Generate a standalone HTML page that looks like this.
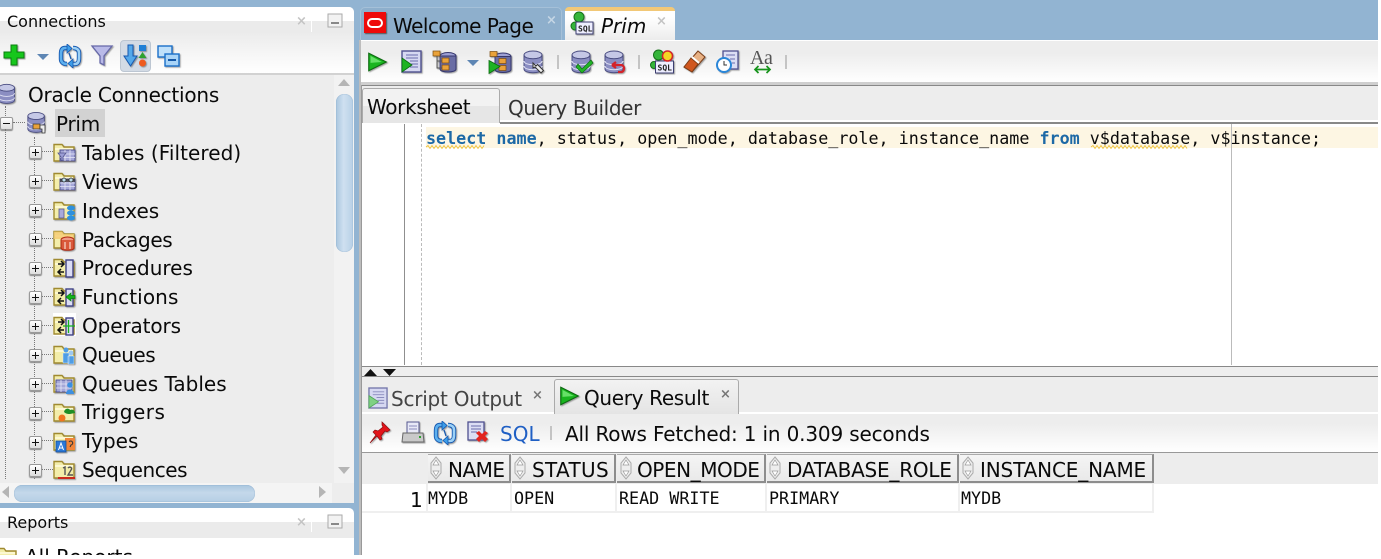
<!DOCTYPE html>
<html><head><meta charset="utf-8"><style>
html,body{margin:0;padding:0;background:#fff}
body{width:1381px;height:559px;overflow:hidden;position:relative}
#app{position:absolute;left:0;top:0;width:1378px;height:555px;background:#92b4d2;overflow:hidden;filter:blur(.3px)}
.a{position:absolute}
.t{position:absolute;white-space:nowrap;font-family:"DejaVu Sans","Liberation Sans",sans-serif;font-size:20px;line-height:24px;color:#0a0a0a}
.m{position:absolute;white-space:nowrap;font-family:"DejaVu Sans Mono","Liberation Mono",monospace;font-size:16.72px;line-height:20px;color:#0a0a0a}
.i{position:absolute;overflow:visible;filter:drop-shadow(1px 1px .6px rgba(0,0,0,.35))}
.n{position:absolute;overflow:visible}
.c{position:absolute;white-space:nowrap;font-family:"DejaVu Sans",sans-serif;font-size:13px;font-weight:bold;line-height:20px}
.x{position:absolute;width:11px;height:11px;border:1px solid #999;border-radius:2px;background:linear-gradient(#fff,#ddd);box-shadow:0 1px 1px #888}
.x:before{content:"";position:absolute;left:2px;top:5px;width:7px;height:1px;background:#111}
.p:after{content:"";position:absolute;left:5px;top:2px;width:1px;height:7px;background:#111}
.dv{position:absolute;border-left:1px dotted #777;width:0}
.dh{position:absolute;border-top:1px dotted #777;height:0}
.th{position:absolute;top:454px;height:29px;background:linear-gradient(#f4f4f4,#e9e9e9);border-right:2px solid #8d8d8d;border-bottom:2px solid #8d8d8d;border-top:1px solid #aaa;box-sizing:border-box}
.td{position:absolute;top:484px;height:29px;border-right:2px solid #efefef;border-bottom:2px solid #efefef;box-sizing:border-box}
</style></head><body><div id="app">
<svg width="0" height="0" style="position:absolute"><defs>
<symbol id="f" viewBox="0 0 24 24"><path d="M1 3.500h8l2 2.500h10v14H1z" fill="#f3edaa" stroke="#a08a30" stroke-width="1.400"/><path d="M2 7h18v2H2z" fill="#fcf8d2"/></symbol>
<symbol id="go" viewBox="0 0 24 24"><path d="M2 2L22 12L2 22z" fill="#19b51f" stroke="#0c6a10" stroke-width="1.300"/><path d="M4 5L17 12L4 13z" fill="#66e068"/></symbol>
<symbol id="rf" viewBox="0 0 24 24"><path d="M11 4H7C3.500 4 3 7 3 10v5c0 3 2 5 6 5" fill="none" stroke="#1558b0" stroke-width="4.400"/><path d="M11 4H7C3.500 4 3 7 3 10v5c0 3 2 5 6 5" fill="none" stroke="#5db0ee" stroke-width="2.600"/><path d="M13 20h4c3.500 0 4-3 4-6V9c0-3-2-5-6-5" fill="none" stroke="#1558b0" stroke-width="4.400"/><path d="M13 20h4c3.500 0 4-3 4-6V9c0-3-2-5-6-5" fill="none" stroke="#9bd0f6" stroke-width="2.600"/><path d="M9 0v9l5-4.500zM15 24v-9l-5 4.500z" fill="#3d9de8" stroke="#1558b0" stroke-width=".8"/><path d="M11 9l2 6" stroke="#1558b0" stroke-width="1.200"/></symbol>
<symbol id="db" viewBox="0 0 24 24"><ellipse cx="11" cy="5" rx="9" ry="4" fill="#c5c8e6" stroke="#4b4e82"/><path d="M2 5v14c0 5 18 5 18 0V5c0 5-18 5-18 0z" fill="#8b8ec2" stroke="#4b4e82"/><path d="M2 11c0 5 18 5 18 0M2 16c0 5 18 5 18 0" fill="none" stroke="#dfe0f3"/></symbol>
<symbol id="grid" viewBox="0 0 24 24"><rect x="7" y="9" width="15" height="11" fill="#a6a8d8" stroke="#4f5190"/><path d="M7 13h15M7 16.500h15M12 9v11M17 9v11" stroke="#e6e7f7" stroke-width=".8"/></symbol>
<symbol id="arr" viewBox="0 0 24 24"><path d="M5 8h6M8 5l3 3-3 3M11 16H5M8 13l-3 3 3 3" fill="none" stroke="#111" stroke-width="1.500"/><rect x="13" y="4" width="7" height="17" fill="#dcdcf4" stroke="#3f4185" stroke-width="1.400"/></symbol>
<symbol id="sort" viewBox="0 0 12 24"><path d="M6 1L11 7V17L6 23L1 17V7z" fill="#eee" stroke="#aaa"/><path d="M6 4l3 5H3zM6 20l3-5H3z" fill="#fff" stroke="#999" stroke-width=".7"/></symbol>
<symbol id="mn" viewBox="0 0 16 16"><rect x="1" y="1" width="14" height="13" fill="#f2f2f2" stroke="#aaa"/><rect x="4" y="9" width="8" height="2" fill="#888"/></symbol>
</defs></svg>

<!-- LEFT TOP PANEL -->
<div class="a" style="left:0;top:7px;width:354px;height:496px;background:#ededed;border-radius:0 5px 0 0;overflow:hidden">
<div class="a" style="left:0;top:0;width:354px;height:14px;background:#fff"></div>
<div class="a" style="left:0;top:14px;width:354px;height:12px;background:#ebebeb"></div>
<div class="a" style="left:0;top:26px;width:354px;height:40px;background:linear-gradient(#ececec,#fff)"></div>
<div class="a" style="left:0;top:66px;width:354px;height:2px;background:#d2d2d2"></div>
</div>
<div class="t" style="left:7px;top:12px;font-size:16px;line-height:20px">Connections</div>
<div class="c" style="left:296px;top:12px;color:#c4c4c4">×</div>
<div class="a" style="left:311px;top:12px;width:1px;height:20px;background:#fff"></div>
<svg class="n" style="left:327px;top:13px" width="16" height="16"><use href="#mn"/></svg>

<svg class="i" style="left:3px;top:44px" width="23" height="23" viewBox="0 0 23 23"><path d="M8 1h6v7h7v6h-7v7H8v-7H1V8h7z" fill="#16c71c" stroke="#0a7d0e"/></svg>
<svg class="n" style="left:37px;top:53px" width="13" height="8"><path d="M0 1h12L6 7z" fill="#5e86b4"/></svg>
<svg class="i" style="left:58px;top:44px" width="24" height="24"><use href="#rf"/></svg>
<svg class="i" style="left:91px;top:45px" width="22" height="22" viewBox="0 0 22 22"><path d="M1 1h20L13 11v9l-4-2v-7z" fill="#b9bae8" stroke="#6668a8" stroke-width="1.300"/></svg>
<div class="a" style="left:120px;top:40px;width:31px;height:32px;background:#d3dbe5;border:1px solid #bcc6d2;border-radius:4px;box-sizing:border-box"></div>
<svg class="i" style="left:123px;top:44px" width="26" height="24" viewBox="0 0 26 24"><path d="M5 1h5v11h4l-6.500 10L1 12h4z" fill="#54a8ea" stroke="#1558b0"/><rect x="16" y="1" width="7" height="6" fill="#1f7fd6"/><path d="M19.500 8l4 6h-8z" fill="#2da12f"/><circle cx="19.500" cy="19" r="3.500" fill="#ee5a1e"/></svg>
<svg class="i" style="left:157px;top:44px" width="23" height="24" viewBox="0 0 23 24"><rect x="1" y="2" width="14" height="11" fill="#bfe0fa" stroke="#1a6fc9" stroke-width="1.400"/><rect x="8" y="10" width="14" height="12" fill="#a9d4f7" stroke="#1a6fc9" stroke-width="1.400"/><rect x="11" y="15" width="8" height="2" fill="#1458a8"/></svg>

<!-- tree -->
<svg class="i" style="left:-3px;top:82px" width="21" height="24"><use href="#db"/></svg>
<div class="t" style="left:28px;top:83px;letter-spacing:-.22px">Oracle Connections</div>
<div class="a" style="left:55px;top:109px;width:50px;height:28px;background:#d2d2d2"></div>
<div class="x" style="left:0;top:117px"></div>
<div class="dh" style="left:13px;top:122px;width:12px"></div>
<div class="dv" style="left:5px;top:106px;height:10px"></div>
<div class="dv" style="left:5px;top:129px;height:350px"></div>
<div class="dv" style="left:34px;top:137px;height:342px"></div>
<svg class="i" style="left:26px;top:111px" width="22" height="23"><use href="#db"/></svg>
<svg class="n" style="left:32px;top:122px" width="16" height="12" viewBox="0 0 16 12"><rect x="1" y="2" width="7" height="5" fill="#e9a23a" stroke="#333" stroke-width=".7"/><path d="M8 3h5v8h-3V7H8z" fill="#eee" stroke="#333" stroke-width=".8"/></svg>
<div class="t" style="left:56px;top:112px;letter-spacing:-.25px">Prim</div>

<div class="x p" style="left:29px;top:146px"></div><div class="dh" style="left:42px;top:151px;width:11px"></div>
<svg class="i" style="left:53px;top:141px" width="24" height="24"><use href="#f"/><use href="#grid"/><path d="M5 12h8l-3 4v4l-2-1v-3z" fill="#9b9dd5" stroke="#55578f" stroke-width=".8"/></svg>
<div class="t" style="left:82px;top:141px;letter-spacing:.06px">Tables (Filtered)</div>

<div class="x p" style="left:29px;top:175px"></div><div class="dh" style="left:42px;top:180px;width:11px"></div>
<svg class="i" style="left:53px;top:170px" width="24" height="24"><use href="#f"/><use href="#grid"/><path d="M7 9h15v3H7z" fill="#333" opacity=".75"/><circle cx="11" cy="10" r="2" fill="#bde" stroke="#222" stroke-width=".7"/><circle cx="18" cy="10" r="2" fill="#bde" stroke="#222" stroke-width=".7"/></svg>
<div class="t" style="left:82px;top:170px;letter-spacing:-.4px">Views</div>

<div class="x p" style="left:29px;top:204px"></div><div class="dh" style="left:42px;top:209px;width:11px"></div>
<svg class="i" style="left:53px;top:199px" width="24" height="24"><use href="#f"/><rect x="6" y="10" width="5" height="9" fill="#a8a9da" stroke="#55578f" stroke-width=".8"/><ellipse cx="18" cy="9" rx="4" ry="2.500" fill="#2e90dd"/><ellipse cx="18" cy="14" rx="4" ry="2.500" fill="#2e90dd"/><ellipse cx="18" cy="19" rx="4" ry="2.500" fill="#2e90dd"/></svg>
<div class="t" style="left:82px;top:199px">Indexes</div>

<div class="x p" style="left:29px;top:233px"></div><div class="dh" style="left:42px;top:238px;width:11px"></div>
<svg class="i" style="left:53px;top:228px" width="24" height="24"><use href="#f"/><path d="M1 3.500h8l2 2.500h10v5H1z" fill="#f4c96f" opacity=".8"/><ellipse cx="14.500" cy="12" rx="6.500" ry="3" fill="#ef9a86" stroke="#b12a14"/><path d="M8 12v8c0 3 13 3 13 0v-8" fill="#d9583a" stroke="#b12a14"/><path d="M12 14v7M17 14v7" stroke="#f7d0c3" stroke-width="1.300"/></svg>
<div class="t" style="left:82px;top:228px;letter-spacing:-.37px">Packages</div>

<div class="x p" style="left:29px;top:262px"></div><div class="dh" style="left:42px;top:267px;width:11px"></div>
<svg class="i" style="left:53px;top:256px" width="24" height="24"><use href="#f"/><use href="#arr"/></svg>
<div class="t" style="left:82px;top:256px">Procedures</div>

<div class="x p" style="left:29px;top:291px"></div><div class="dh" style="left:42px;top:296px;width:11px"></div>
<svg class="i" style="left:53px;top:285px" width="24" height="24"><use href="#f"/><use href="#arr"/><path d="M13 12l5-4v2.500h4v3h-4v2.500z" fill="#14b41a" stroke="#0a7d0e" stroke-width=".7"/></svg>
<div class="t" style="left:82px;top:285px;letter-spacing:.11px">Functions</div>

<div class="x p" style="left:29px;top:320px"></div><div class="dh" style="left:42px;top:325px;width:11px"></div>
<div class="a" style="left:53px;top:313px;width:23px;height:23px;background:#fff"></div>
<svg class="n" style="left:53px;top:314px" width="24" height="24"><use href="#f"/><use href="#arr"/><path d="M10 12h12M15.500 6v13" stroke="#16b51c" stroke-width="1.300"/></svg>
<div class="t" style="left:82px;top:314px;letter-spacing:-.11px">Operators</div>

<div class="x p" style="left:29px;top:349px"></div><div class="dh" style="left:42px;top:354px;width:11px"></div>
<svg class="i" style="left:53px;top:343px" width="24" height="24"><use href="#f"/><circle cx="13" cy="7" r="2.500" fill="#4f9de5"/><circle cx="18" cy="10" r="2.500" fill="#9cc8f2"/><path d="M10 10h6v10h-6zM15 13h6v8h-6z" fill="#4f9de5" stroke="#d6e8f9" stroke-width=".5"/></svg>
<div class="t" style="left:82px;top:343px;letter-spacing:-.5px">Queues</div>

<div class="x p" style="left:29px;top:378px"></div><div class="dh" style="left:42px;top:383px;width:11px"></div>
<svg class="i" style="left:53px;top:372px" width="24" height="24"><use href="#f"/><rect x="3" y="8" width="16" height="12" fill="#a6a8d8" stroke="#4f5190"/><path d="M3 12h16M3 16h16M8 8v12M13 8v12" stroke="#e6e7f7" stroke-width=".8"/><circle cx="17" cy="13" r="2.800" fill="#3d8fe0"/><path d="M13 22c0-6 8-6 8 0z" fill="#3d8fe0"/></svg>
<div class="t" style="left:82px;top:372px">Queues Tables</div>

<div class="x p" style="left:29px;top:407px"></div><div class="dh" style="left:42px;top:411px;width:11px"></div>
<svg class="i" style="left:53px;top:401px" width="24" height="24"><use href="#f"/><circle cx="9" cy="17" r="3.500" fill="#f0741e"/><path d="M11 11c1-4 5-4 6-2 2-1 5 0 5 3l-5 1c-2 0-4 0-6-2z" fill="#1f8f25"/></svg>
<div class="t" style="left:82px;top:400px;letter-spacing:.5px">Triggers</div>

<div class="x p" style="left:29px;top:436px"></div><div class="dh" style="left:42px;top:440px;width:11px"></div>
<svg class="i" style="left:53px;top:430px" width="24" height="24"><use href="#f"/><rect x="12" y="8" width="10" height="12" fill="#f0853a"/><rect x="3" y="11" width="10" height="11" fill="#2b78d8" stroke="#164f9a" stroke-width=".8"/><path d="M5.500 20l2.500-7 2.500 7M6.500 18h3" fill="none" stroke="#fff"/><path d="M16 12a2 2 0 1 1 2 3l-1 2" fill="none" stroke="#333"/></svg>
<div class="t" style="left:82px;top:429px">Types</div>

<div class="x p" style="left:29px;top:464px"></div><div class="dh" style="left:42px;top:469px;width:11px"></div>
<svg class="i" style="left:53px;top:458px" width="24" height="24"><use href="#f"/><path d="M10 10l2-1v8M15 10c2-2 5 0 3 2l-3 5h5" fill="none" stroke="#555" stroke-width="1.400"/><path d="M5 19h17v2H5z" fill="#cc2a1c"/></svg>
<div class="t" style="left:82px;top:458px;letter-spacing:-.44px">Sequences</div>

<!-- vertical scrollbar -->
<div class="a" style="left:334px;top:75px;width:20px;height:408px;background:#f2f2f2"></div>
<div class="a" style="left:336px;top:94px;width:17px;height:158px;border-radius:8px;background:linear-gradient(90deg,#a9c6df,#cfe0f0 45%,#b7d0e6);box-shadow:inset 0 0 1px #6f97bb"></div>
<svg class="n" style="left:338px;top:79px" width="12" height="7"><path d="M0 7L6 0l6 7z" fill="#b5b5b5"/></svg>
<svg class="n" style="left:338px;top:467px" width="12" height="7"><path d="M0 0h12L6 7z" fill="#b5b5b5"/></svg>
<!-- horizontal scrollbar -->
<div class="a" style="left:0;top:483px;width:332px;height:20px;background:#f4f4f4"></div>
<div class="a" style="left:14px;top:485px;width:241px;height:17px;border-radius:8px;background:linear-gradient(#a9c6df,#c4d8ea 45%,#b5cee4);box-shadow:inset 0 0 1px #6f97bb"></div>
<svg class="n" style="left:2px;top:486px" width="7" height="12"><path d="M7 0v12L0 6z" fill="#b5b5b5"/></svg>
<svg class="n" style="left:319px;top:486px" width="7" height="12"><path d="M0 0v12l7-6z" fill="#b5b5b5"/></svg>

<!-- REPORTS -->
<div class="a" style="left:0;top:508px;width:354px;height:47px;background:#fff;border-radius:0 5px 0 0;overflow:hidden">
<div class="a" style="left:0;top:14px;width:354px;height:16px;background:#ebebeb"></div>
</div>
<div class="t" style="left:7px;top:513px;font-size:16px;line-height:20px">Reports</div>
<div class="c" style="left:296px;top:513px;color:#c4c4c4">×</div>
<div class="a" style="left:311px;top:512px;width:1px;height:20px;background:#fff"></div>
<svg class="n" style="left:327px;top:514px" width="16" height="16"><use href="#mn"/></svg>
<div class="a" style="left:0;top:540px;width:354px;height:15px;overflow:hidden">
<div class="t" style="left:25px;top:5px">All Reports</div>
<svg class="n" style="left:-5px;top:5px" width="24" height="24"><use href="#f"/></svg>
</div>

<!-- DOC TABS -->
<div class="a" style="left:360px;top:7px;width:202px;height:33px;background:#8eafcc;border:1px solid #a5c0d8;border-bottom:0;border-radius:5px 5px 0 0;box-sizing:border-box"></div>
<div class="a" style="left:364px;top:12px;width:22px;height:21px;background:#ee0a0a;box-shadow:1px 1px 1px #555"></div>
<div class="a" style="left:367px;top:18px;width:12px;height:6px;border:2px solid #fff;border-radius:5px"></div>
<div class="t" style="left:393px;top:14px;letter-spacing:-.5px">Welcome Page</div>
<div class="c" style="left:546px;top:11px;color:#c5d6e5">×</div>
<div class="a" style="left:565px;top:7px;width:110px;height:33px;background:linear-gradient(#fff 20%,#ececec);border-top:4px solid #f2c877;border-radius:4px 4px 0 0;box-sizing:border-box"></div>
<svg class="i" style="left:570px;top:11px" width="24" height="25" viewBox="0 0 24 25"><circle cx="9" cy="6" r="5" fill="#35b53a" stroke="#16701a"/><circle cx="5" cy="15" r="4" fill="#35b53a" stroke="#16701a"/><rect x="6" y="11" width="17" height="12" fill="#eef" stroke="#3c3e70"/><text x="8" y="20.500" font-family="DejaVu Sans Mono" font-size="8" font-weight="bold" fill="#222">SQL</text></svg>
<div class="t" style="left:601px;top:14px;font-style:italic">Prim</div>
<div class="c" style="left:656px;top:12px;color:#c4c4c4">×</div>

<!-- RIGHT -->
<div class="a" style="left:359px;top:40px;width:1019px;height:515px;background:#fff"></div>
<div class="a" style="left:360px;top:41px;width:1018px;height:41px;background:linear-gradient(#ededed 30%,#fff)"></div>
<div class="a" style="left:360px;top:82px;width:1018px;height:3px;background:#cfcfcf"></div>
<div class="a" style="left:360px;top:85px;width:1018px;height:1px;background:#888"></div>

<svg class="i" style="left:367px;top:51px" width="21" height="22"><use href="#go"/></svg>
<svg class="i" style="left:401px;top:50px" width="21" height="23" viewBox="0 0 21 23"><rect x="1" y="1" width="19" height="21" fill="#d6d8f1" stroke="#4f5190" stroke-width="1.400"/><path d="M5 5h12M5 8h12M9 11h8M10 14h7M9 17h8" stroke="#6a6cad"/><path d="M1 8l10 7-10 7z" fill="#1eb324" stroke="#0c6a10" stroke-width=".8"/></svg>
<svg class="i" style="left:433px;top:50px" width="24" height="23" viewBox="0 0 24 23"><ellipse cx="15" cy="6" rx="8" ry="3.500" fill="#9ea1d4" stroke="#35376e"/><path d="M7 6v13c0 4 16 4 16 0V6z" fill="#6a6da4" stroke="#35376e"/><path d="M4 5v13h6M4 11h6" fill="none" stroke="#555"/><rect x="0" y="1" width="7" height="5" fill="#e9a23a" stroke="#7a4c10" stroke-width=".7"/><rect x="9" y="8" width="7" height="5" fill="#e9a23a" stroke="#7a4c10" stroke-width=".7"/><rect x="9" y="15" width="7" height="5" fill="#e9a23a" stroke="#7a4c10" stroke-width=".7"/></svg>
<svg class="n" style="left:467px;top:59px" width="13" height="8"><path d="M0 1h12L6 7z" fill="#5e86b4"/></svg>
<svg class="i" style="left:488px;top:50px" width="24" height="24" viewBox="0 0 24 23"><ellipse cx="15" cy="6" rx="8" ry="3.500" fill="#9ea1d4" stroke="#35376e"/><path d="M7 6v13c0 4 16 4 16 0V6z" fill="#6a6da4" stroke="#35376e"/><rect x="2" y="1" width="7" height="5" fill="#e9a23a" stroke="#7a4c10" stroke-width=".7"/><rect x="11" y="8" width="7" height="5" fill="#e9a23a" stroke="#7a4c10" stroke-width=".7"/><rect x="11" y="15" width="7" height="5" fill="#e9a23a" stroke="#7a4c10" stroke-width=".7"/><path d="M1 10l11 6-11 7z" fill="#1eb324" stroke="#0c6a10" stroke-width=".8"/></svg>
<svg class="i" style="left:522px;top:50px" width="24" height="24"><use href="#db"/><path d="M11 13l3 3 1.500-1.500 6 6-2.500 2.500-6-6-2 1z" fill="#eee" stroke="#333"/></svg>
<div class="a" style="left:557px;top:55px;width:2px;height:14px;background:#c4c4c4"></div>
<svg class="i" style="left:570px;top:50px" width="24" height="24"><use href="#db"/><path d="M8 14l4 5 9-9 2 3-11 10-6-6z" fill="#22b528" stroke="#0d6f12" stroke-width=".7"/></svg>
<svg class="i" style="left:603px;top:50px" width="24" height="24"><use href="#db"/><path d="M9 15h9c4 0 4 7 0 7h-3M9 15l4-3M9 15l4 3" fill="none" stroke="#d4232a" stroke-width="2.300"/></svg>
<div class="a" style="left:638px;top:55px;width:2px;height:14px;background:#c4c4c4"></div>
<svg class="i" style="left:650px;top:49px" width="25" height="25" viewBox="0 0 24 25"><circle cx="8" cy="6" r="5" fill="#35b53a" stroke="#16701a"/><circle cx="3.500" cy="16" r="3.500" fill="#35b53a" stroke="#16701a"/><rect x="5" y="12" width="18" height="12" fill="#eef" stroke="#3c3e70"/><text x="7" y="21.500" font-family="DejaVu Sans Mono" font-size="8" font-weight="bold" fill="#222">SQL</text><circle cx="17" cy="7" r="5" fill="#f5d623" stroke="#d4232a" stroke-width="1.500"/></svg>
<svg class="i" style="left:683px;top:50px" width="23" height="24" viewBox="0 0 23 24"><path d="M15 1l7 6L9 22 1 17z" fill="#e8b184" stroke="#7a3d18"/><path d="M1 17l7-9 7 6-6 8z" fill="#d0571e" stroke="#7a3d18"/><path d="M9 7l7 6" stroke="#fff" stroke-width="2"/></svg>
<svg class="i" style="left:716px;top:50px" width="23" height="24" viewBox="0 0 23 24"><rect x="7" y="1" width="15" height="18" fill="#dcdef4" stroke="#4f5190" stroke-width="1.300"/><path d="M10 5h9M14 9h5M16 13h3" stroke="#6a6cad"/><circle cx="8" cy="15" r="7" fill="#fff" stroke="#2a86d8" stroke-width="2"/><path d="M8 11v4h3" fill="none" stroke="#333"/></svg>
<div class="t" style="left:750px;top:46px;font-family:'Liberation Serif',serif;font-size:20px;color:#555;letter-spacing:-.5px">Aa</div>
<svg class="n" style="left:754px;top:65px" width="17" height="9"><path d="M1 4.500h15M4.500 1L1 4.500 4.500 8M12.500 1L16 4.500 12.500 8" fill="none" stroke="#16931b" stroke-width="1.700"/></svg>
<div class="a" style="left:785px;top:55px;width:2px;height:14px;background:#c4c4c4"></div>

<!-- Worksheet tabs -->
<div class="a" style="left:360px;top:86px;width:1018px;height:34px;background:#ededed"></div>
<div class="a" style="left:360px;top:120px;width:1018px;height:2px;background:#fff"></div>
<div class="a" style="left:362px;top:88px;width:138px;height:35px;background:linear-gradient(#f2f2f2 50%,#e6e6e6 50%);border:1px solid #aaa;border-bottom:0;border-radius:3px 3px 0 0;box-sizing:border-box"></div>
<div class="t" style="left:367px;top:95px;letter-spacing:-.33px">Worksheet</div>
<div class="t" style="left:508px;top:96px;color:#333;letter-spacing:-.38px">Query Builder</div>
<div class="a" style="left:500px;top:122px;width:878px;height:2px;background:#888"></div>
<div class="a" style="left:361px;top:85px;width:1px;height:470px;background:#999"></div>
<div class="a" style="left:359px;top:40px;width:2px;height:515px;background:#bdbdbd"></div>

<!-- Editor -->
<div class="a" style="left:404px;top:124px;width:1px;height:241px;background:#8f8f8f"></div>
<div class="a" style="left:421px;top:124px;height:241px;border-left:1px dashed #bbb"></div>
<div class="a" style="left:426px;top:127px;width:952px;height:21px;background:#fdf6e3"></div>
<div class="a" style="left:1231px;top:124px;width:1px;height:241px;background:#bbb"></div>
<div class="m" style="left:426px;top:128px"><span style="color:#1d69a6;font-weight:bold">select</span> <span style="color:#1d69a6;font-weight:bold">name</span>, status, open_mode, database_role, instance_name <span style="color:#1d69a6;font-weight:bold">from</span> v$database, v$instance;</div>
<svg class="n" style="left:426px;top:145px" width="60" height="4"><path d="M0 2l2-1.500 2 3 2-3 2 3 2-3 2 3 2-3 2 3 2-3 2 3 2-3 2 3 2-3 2 3 2-3 2 3 2-3 2 3 2-3 2 3 2-3 2 3 2-3 2 3 2-3 2 3 2-3 2 3 2-3" fill="none" stroke="#efc23a" stroke-width=".9"/></svg>
<svg class="n" style="left:1091px;top:145px" width="102" height="4"><path d="M0 2l2-1.500 2 3 2-3 2 3 2-3 2 3 2-3 2 3 2-3 2 3 2-3 2 3 2-3 2 3 2-3 2 3 2-3 2 3 2-3 2 3 2-3 2 3 2-3 2 3 2-3 2 3 2-3 2 3 2-3 2 3 2-3 2 3 2-3 2 3 2-3 2 3 2-3 2 3 2-3 2 3 2-3 2 3 2-3 2 3 2-3 2 3 2-3 2 3" fill="none" stroke="#efc23a" stroke-width=".9"/></svg>

<!-- Splitter -->
<div class="a" style="left:362px;top:366px;width:1016px;height:1px;background:#888"></div>
<div class="a" style="left:362px;top:367px;width:1016px;height:9px;background:#eee"></div>
<svg class="n" style="left:364px;top:369px" width="32" height="7"><path d="M0 7L6.500 0 13 7zM19 0h13l-6.500 7z" fill="#111"/></svg>
<div class="a" style="left:362px;top:376px;width:1016px;height:1px;background:#888"></div>

<!-- Result tabs -->
<div class="a" style="left:362px;top:377px;width:1016px;height:35px;background:#ededed"></div>
<div class="a" style="left:362px;top:412px;width:1016px;height:1px;background:#fff"></div>
<svg class="n" style="left:368px;top:386px" width="20" height="24" viewBox="0 0 21 23"><rect x="1" y="1" width="19" height="21" fill="#d6d8f1" stroke="#7476aa" stroke-width="1.400"/><path d="M5 5h12M5 8h12M9 11h8M10 14h7M9 17h8" stroke="#8a8cbd"/><path d="M1 9l10 6.500-10 6.500z" fill="#7fd183" stroke="#4fa554" stroke-width=".8"/></svg>
<div class="t" style="left:391px;top:387px;color:#444;letter-spacing:-.23px">Script Output</div>
<div class="c" style="left:532px;top:386px;color:#777">×</div>
<div class="a" style="left:554px;top:379px;width:185px;height:35px;background:linear-gradient(#f2f2f2,#e4e4e4);border:1px solid #aaa;border-bottom:0;border-radius:3px 3px 0 0;box-sizing:border-box"></div>
<svg class="i" style="left:559px;top:385px" width="21" height="22"><use href="#go"/></svg>
<div class="t" style="left:584px;top:386px;letter-spacing:-.33px">Query Result</div>
<div class="c" style="left:720px;top:385px;color:#777">×</div>

<!-- Result toolbar -->
<div class="a" style="left:362px;top:414px;width:1016px;height:38px;background:linear-gradient(#ededed 25%,#fff)"></div>
<div class="a" style="left:362px;top:452px;width:1016px;height:1px;background:#999"></div>
<svg class="i" style="left:369px;top:421px" width="22" height="23" viewBox="0 0 22 23"><path d="M13 1l8 8-3 2-2-1-4 5 1 3-2 1-3-4-7 7 6-8-3-3 2-2 3 1 5-4-1-2z" fill="#e3141a" stroke="#8f0b0e" stroke-width=".7"/></svg>
<svg class="i" style="left:401px;top:421px" width="24" height="23" viewBox="0 0 24 23"><rect x="6" y="1" width="12" height="11" fill="#e8e9f7" stroke="#55578f"/><path d="M8 5h8M8 8h8" stroke="#8a8cbd"/><path d="M2 12h20l1 9H1z" fill="#c9c9c9" stroke="#666"/><rect x="18" y="15" width="2" height="2" fill="#2da12f"/></svg>
<svg class="i" style="left:433px;top:421px" width="24" height="24"><use href="#rf"/></svg>
<svg class="i" style="left:467px;top:421px" width="24" height="24" viewBox="0 0 24 24"><rect x="1" y="1" width="16" height="18" fill="#dcdef4" stroke="#4f5190" stroke-width="1.300"/><path d="M4 5h10M4 8h10M4 11h6" stroke="#6a6cad"/><path d="M9 12l3-2 3 3 3-3 3 2-3 3 3 3-3 3-3-3-3 3-3-3 3-3z" fill="#e2241f"/></svg>
<div class="t" style="left:500px;top:422px;color:#1f5fc4">SQL</div>
<div class="a" style="left:550px;top:426px;width:2px;height:14px;background:#c4c4c4"></div>
<div class="t" style="left:565px;top:422px;letter-spacing:-.17px">All Rows Fetched: 1 in 0.309 seconds</div>

<!-- Grid -->
<div class="a" style="left:362px;top:453px;width:1016px;height:31px;background:#ededed"></div>
<div class="th" style="left:428px;width:83px"></div>
<div class="th" style="left:512px;width:104px"></div>
<div class="th" style="left:617px;width:149px"></div>
<div class="th" style="left:767px;width:192px"></div>
<div class="th" style="left:960px;width:194px"></div>
<svg class="n" style="left:430px;top:456px" width="12" height="24"><use href="#sort"/></svg>
<svg class="n" style="left:514px;top:456px" width="12" height="24"><use href="#sort"/></svg>
<svg class="n" style="left:620px;top:456px" width="12" height="24"><use href="#sort"/></svg>
<svg class="n" style="left:769px;top:456px" width="12" height="24"><use href="#sort"/></svg>
<svg class="n" style="left:962px;top:456px" width="12" height="24"><use href="#sort"/></svg>
<div class="t" style="left:448px;top:458px;letter-spacing:-.5px">NAME</div>
<div class="t" style="left:532px;top:458px;letter-spacing:.33px">STATUS</div>
<div class="t" style="left:637px;top:458px;letter-spacing:-.44px">OPEN_MODE</div>
<div class="t" style="left:787px;top:458px;letter-spacing:-.23px">DATABASE_ROLE</div>
<div class="t" style="left:980px;top:458px;letter-spacing:-.15px">INSTANCE_NAME</div>

<div class="td" style="left:362px;width:66px"></div>
<div class="td" style="left:428px;width:84px"></div>
<div class="td" style="left:512px;width:105px"></div>
<div class="td" style="left:617px;width:150px"></div>
<div class="td" style="left:767px;width:193px"></div>
<div class="td" style="left:960px;width:194px"></div>
<div class="t" style="left:410px;top:488px">1</div>
<div class="m" style="left:428px;top:488px">MYDB</div>
<div class="m" style="left:514px;top:488px">OPEN</div>
<div class="m" style="left:619px;top:488px">READ WRITE</div>
<div class="m" style="left:769px;top:488px">PRIMARY</div>
<div class="m" style="left:961px;top:488px">MYDB</div>
</div></body></html>
